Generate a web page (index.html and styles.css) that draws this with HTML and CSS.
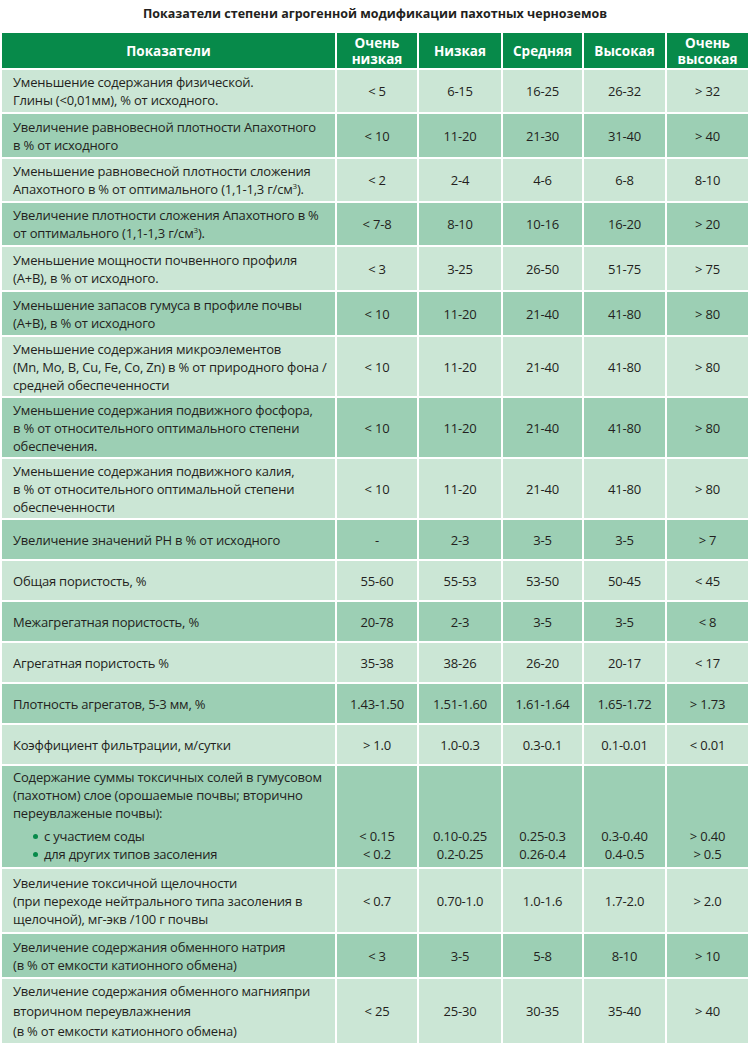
FILE: index.html
```html
<!DOCTYPE html>
<html lang="ru">
<head>
<meta charset="utf-8">
<title>Показатели степени агрогенной модификации пахотных черноземов</title>
<link rel="stylesheet" href="styles.css">
</head>
<body>
<h1 class="title">Показатели степени агрогенной модификации пахотных черноземов</h1>
<table class="grid">
  <colgroup>
    <col class="c-name"><col class="c1"><col class="c2"><col class="c3"><col class="c4"><col class="c5">
  </colgroup>
  <thead>
    <tr><th>Показатели</th><th>Очень<br>низкая</th><th>Низкая</th><th>Средняя</th><th>Высокая</th><th>Очень<br>высокая</th></tr>
  </thead>
  <tbody>
    <tr class="lt one"><td>Уменьшение содержания физической.<br>Глины (&lt;0,01мм), % от исходного.</td><td>&lt; 5</td><td>6-15</td><td>16-25</td><td>26-32</td><td>&gt; 32</td></tr>
    <tr class="dk two"><td>Увеличение равновесной плотности Апахотного<br>в % от исходного</td><td>&lt; 10</td><td>11-20</td><td>21-30</td><td>31-40</td><td>&gt; 40</td></tr>
    <tr class="lt one"><td>Уменьшение равновесной плотности сложения<br>Апахотного в % от оптимального (1,1-1,3 г/см<sup>3</sup>).</td><td>&lt; 2</td><td>2-4</td><td>4-6</td><td>6-8</td><td>8-10</td></tr>
    <tr class="dk one"><td>Увеличение плотности сложения Апахотного в %<br>от оптимального (1,1-1,3 г/см<sup>3</sup>).</td><td>&lt; 7-8</td><td>8-10</td><td>10-16</td><td>16-20</td><td>&gt; 20</td></tr>
    <tr class="lt two"><td>Уменьшение мощности почвенного профиля<br>(А+В), в % от исходного.</td><td>&lt; 3</td><td>3-25</td><td>26-50</td><td>51-75</td><td>&gt; 75</td></tr>
    <tr class="dk two"><td>Уменьшение запасов гумуса в профиле почвы<br>(А+В), в % от исходного</td><td>&lt; 10</td><td>11-20</td><td>21-40</td><td>41-80</td><td>&gt; 80</td></tr>
    <tr class="lt tri"><td>Уменьшение содержания микроэлементов<br>(Mn, Mo, B, Cu, Fe, Co, Zn) в % от природного фона /<br>средней обеспеченности</td><td>&lt; 10</td><td>11-20</td><td>21-40</td><td>41-80</td><td>&gt; 80</td></tr>
    <tr class="dk tri"><td>Уменьшение содержания подвижного фосфора,<br>в % от относительного оптимального степени<br>обеспечения.</td><td>&lt; 10</td><td>11-20</td><td>21-40</td><td>41-80</td><td>&gt; 80</td></tr>
    <tr class="lt tri"><td>Уменьшение содержания подвижного калия,<br>в % от относительного оптимальной степени<br>обеспеченности</td><td>&lt; 10</td><td>11-20</td><td>21-40</td><td>41-80</td><td>&gt; 80</td></tr>
    <tr class="dk"><td>Увеличение значений РН в % от исходного</td><td>-</td><td>2-3</td><td>3-5</td><td>3-5</td><td>&gt; 7</td></tr>
    <tr class="lt"><td>Общая пористость, %</td><td>55-60</td><td>55-53</td><td>53-50</td><td>50-45</td><td>&lt; 45</td></tr>
    <tr class="dk"><td>Межагрегатная пористость, %</td><td>20-78</td><td>2-3</td><td>3-5</td><td>3-5</td><td>&lt; 8</td></tr>
    <tr class="lt"><td>Агрегатная пористость %</td><td>35-38</td><td>38-26</td><td>26-20</td><td>20-17</td><td>&lt; 17</td></tr>
    <tr class="dk"><td>Плотность агрегатов, 5-3 мм, %</td><td>1.43-1.50</td><td>1.51-1.60</td><td>1.61-1.64</td><td>1.65-1.72</td><td>&gt; 1.73</td></tr>
    <tr class="lt"><td>Коэффициент фильтрации, м/сутки</td><td>&gt; 1.0</td><td>1.0-0.3</td><td>0.3-0.1</td><td>0.1-0.01</td><td>&lt; 0.01</td></tr>
    <tr class="dk bottom"><td>Содержание суммы токсичных солей в гумусовом<br>(пахотном) слое (орошаемые почвы; вторично<br>переувлаженые почвы):
      <ul class="dots"><li>с участием соды</li><li>для других типов засоления</li></ul></td>
      <td>&lt; 0.15<br>&lt; 0.2</td><td>0.10-0.25<br>0.2-0.25</td><td>0.25-0.3<br>0.26-0.4</td><td>0.3-0.40<br>0.4-0.5</td><td>&gt; 0.40<br>&gt; 0.5</td></tr>
    <tr class="lt three"><td>Увеличение токсичной щелочности<br>(при переходе нейтрального типа засоления в<br>щелочной), мг-экв /100 г почвы</td><td>&lt; 0.7</td><td>0.70-1.0</td><td>1.0-1.6</td><td>1.7-2.0</td><td>&gt; 2.0</td></tr>
    <tr class="dk two"><td>Увеличение содержания обменного натрия<br>(в % от емкости катионного обмена)</td><td>&lt; 3</td><td>3-5</td><td>5-8</td><td>8-10</td><td>&gt; 10</td></tr>
    <tr class="lt tall"><td>Увеличение содержания обменного магнияпри<br>вторичном переувлажнения<br>(в % от емкости катионного обмена)</td><td>&lt; 25</td><td>25-30</td><td>30-35</td><td>35-40</td><td>&gt; 40</td></tr>
  </tbody>
</table>
</body>
</html>
```

FILE: styles.css
```css
html, body {
  margin: 0;
  padding: 0;
  background: #ffffff;
}

body {
  width: 750px;
  font-family: "Open Sans", "Noto Sans", "Liberation Sans", sans-serif;
  color: #231f20;
}

.title {
  margin: 0;
  height: 31px;
  padding-top: 5px;
  box-sizing: border-box;
  font-size: 12.5px;
  line-height: 18px;
  font-weight: 700;
  text-align: center;
  letter-spacing: 0;
  color: #231f20;
}

.grid {
  width: 750px;
  table-layout: fixed;
  border-collapse: separate;
  border-spacing: 2px;
  font-size: 13px;
  letter-spacing: -0.2px;
}

.c-name { width: 333px; }
.c1 { width: 80px; }
.c2 { width: 82px; }
.c3 { width: 79px; }
.c4 { width: 81px; }
.c5 { width: 81px; }

.grid th {
  background: #078a4a;
  color: #ffffff;
  font-weight: 700;
  font-size: 13.5px;
  letter-spacing: 0;
  line-height: 16px;
  height: 35px;
  padding: 0 2px;
  text-align: center;
  vertical-align: middle;
}

.grid td {
  height: 35px;
  padding: 2px 2px;
  line-height: 18px;
  text-align: center;
  vertical-align: middle;
}

.grid td:first-child {
  text-align: left;
  padding-left: 11px;
  padding-right: 4px;
}

.lt td { background: #cbe6d5; }
.dk td { background: #9ccfb4; }

.one td { height: 38px; }
.two td { height: 39px; }
.tri td { height: 55px; }
.three td { height: 59px; }

.tall td {
  height: 60px;
  line-height: 20px;
}

.grid sup {
  font-size: 8px;
  line-height: 0;
  vertical-align: 5px;
}

.bottom td {
  vertical-align: bottom;
  padding-bottom: 4px;
}

.bottom td:first-child {
  vertical-align: middle;
}

.dots {
  list-style: none;
  margin: 5px 0 0;
  padding: 0 0 0 31px;
}

.dots li {
  position: relative;
  line-height: 18px;
}

.dots li::before {
  content: "";
  position: absolute;
  left: -11px;
  top: 7px;
  width: 5px;
  height: 5px;
  border-radius: 50%;
  background: #078a4a;
}
```
